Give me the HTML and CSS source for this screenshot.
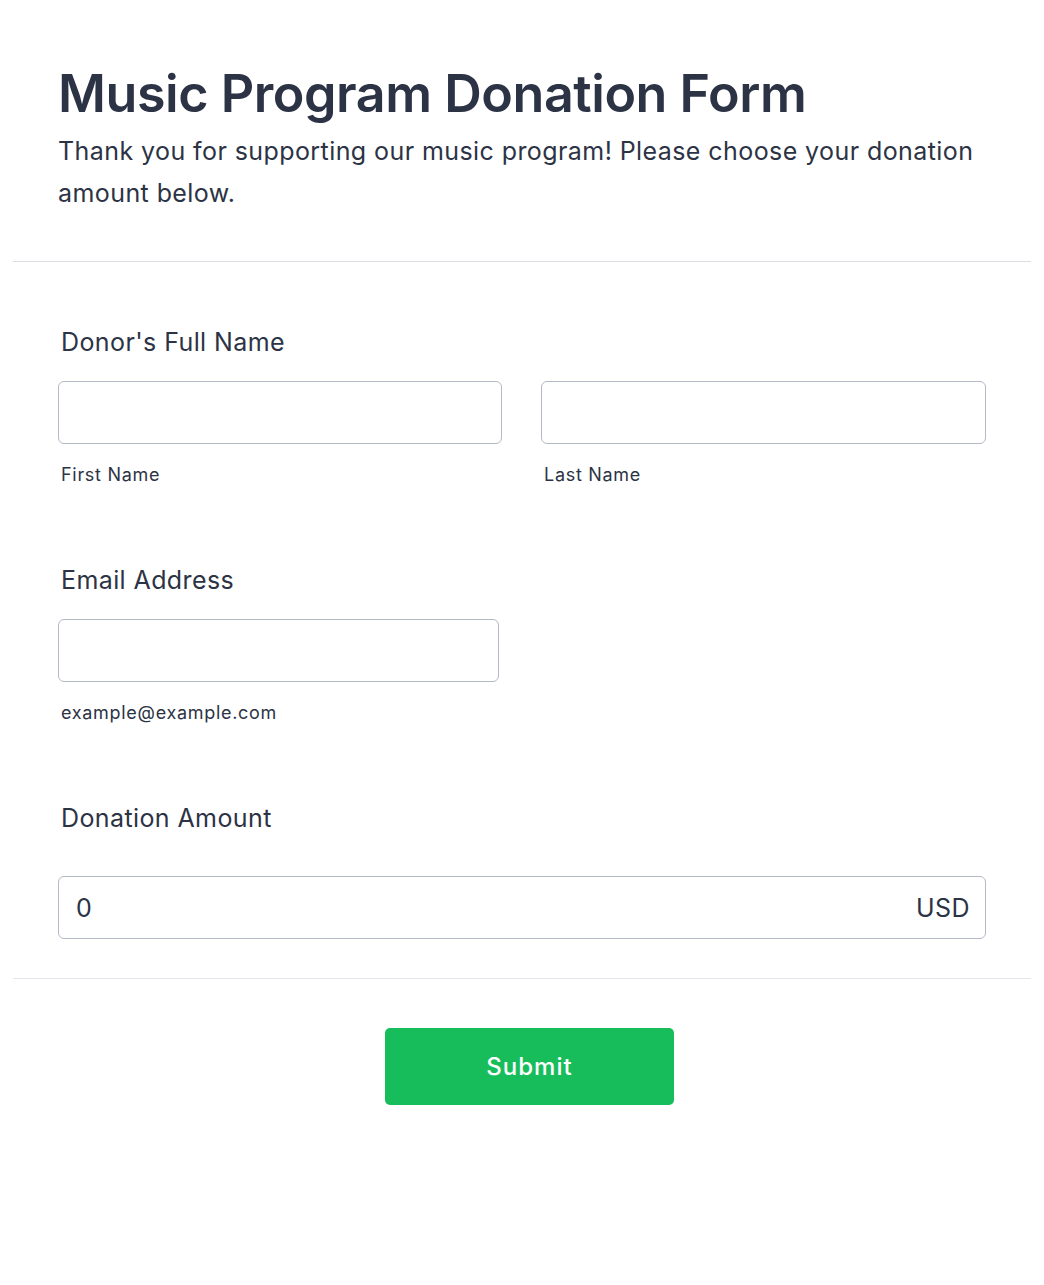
FILE: index.html
```html
<!DOCTYPE html>
<html lang="en">
<head>
<meta charset="utf-8">
<title>Music Program Donation Form</title>
<link rel="stylesheet" href="styles.css">
</head>
<body>
<form class="form">
  <header class="form-header">
    <h1 class="form-title">Music Program Donation Form</h1>
    <p class="form-subtitle">Thank you for supporting our music program! Please choose your donation amount below.</p>
  </header>

  <section class="form-body">
    <div class="field">
      <label class="field-label">Donor's Full Name</label>
      <div class="name-row">
        <div class="sub-field">
          <input class="text-input" type="text">
          <span class="sublabel">First Name</span>
        </div>
        <div class="sub-field">
          <input class="text-input" type="text">
          <span class="sublabel">Last Name</span>
        </div>
      </div>
    </div>

    <div class="field">
      <label class="field-label">Email Address</label>
      <div class="sub-field email">
        <input class="text-input" type="email">
        <span class="sublabel">example@example.com</span>
      </div>
    </div>

    <div class="field amount-field">
      <label class="field-label">Donation Amount</label>
      <div class="amount-box">
        <span class="amount-value">0</span>
        <span class="amount-currency">USD</span>
      </div>
    </div>
  </section>

  <footer class="form-footer">
    <button class="submit-btn" type="button">Submit</button>
  </footer>
</form>
</body>
</html>
```

FILE: styles.css
```css
* { box-sizing: border-box; }

html, body {
  margin: 0;
  padding: 0;
  background: #ffffff;
}

body {
  font-family: Inter, "Noto Sans", "Liberation Sans", sans-serif;
  color: #2c3345;
}

.form {
  margin: 0 13px;
}

.form-header {
  padding: 63px 45px 47px;
  border-bottom: 1px solid #dcdde3;
}

.form-title {
  margin: 0;
  font-size: 52px;
  line-height: 62px;
  font-weight: 600;
  letter-spacing: -0.45px;
}

.form-subtitle {
  margin: 5px 0 0;
  font-size: 25px;
  line-height: 42px;
  font-weight: 400;
  letter-spacing: 0.42px;
}

.form-body {
  padding: 66px 45px 39px;
  border-bottom: 1px solid #e6e7ec;
  display: flex;
  flex-direction: column;
  gap: 80px;
}

.field {
  display: flex;
  flex-direction: column;
  gap: 24px;
}

.amount-field {
  gap: 43px;
}

.field-label {
  display: block;
  padding-left: 3px;
  font-size: 25px;
  line-height: 29px;
  font-weight: 400;
  letter-spacing: 0.4px;
}

.name-row {
  display: grid;
  grid-template-columns: 444px 445px;
  column-gap: 39px;
}

.sub-field {
  display: flex;
  flex-direction: column;
  gap: 20px;
}

.sub-field.email {
  width: 441px;
}

.text-input {
  display: block;
  width: 100%;
  height: 63px;
  margin: 0;
  border: 1px solid #b4b9c6;
  border-radius: 6px;
  background: #ffffff;
  font: inherit;
}

.sublabel {
  display: block;
  padding-left: 3px;
  font-size: 18px;
  line-height: 22px;
  letter-spacing: 0.7px;
  color: #2c3345;
}

.amount-box {
  display: flex;
  align-items: center;
  justify-content: space-between;
  width: 928px;
  height: 63px;
  padding: 0 16px 0 17px;
  border: 1px solid #b4b9c6;
  border-radius: 6px;
  font-size: 25px;
  letter-spacing: 0.4px;
}

.amount-currency {
  margin-right: -1px;
}

.form-footer {
  display: flex;
  justify-content: center;
  padding: 49px 0 180px 15px;
}

.submit-btn {
  width: 289px;
  height: 77px;
  border: none;
  border-radius: 5px;
  background: #18bd5b;
  color: #ffffff;
  font-family: inherit;
  font-size: 24px;
  font-weight: 500;
  letter-spacing: 1px;
  cursor: pointer;
}
```
